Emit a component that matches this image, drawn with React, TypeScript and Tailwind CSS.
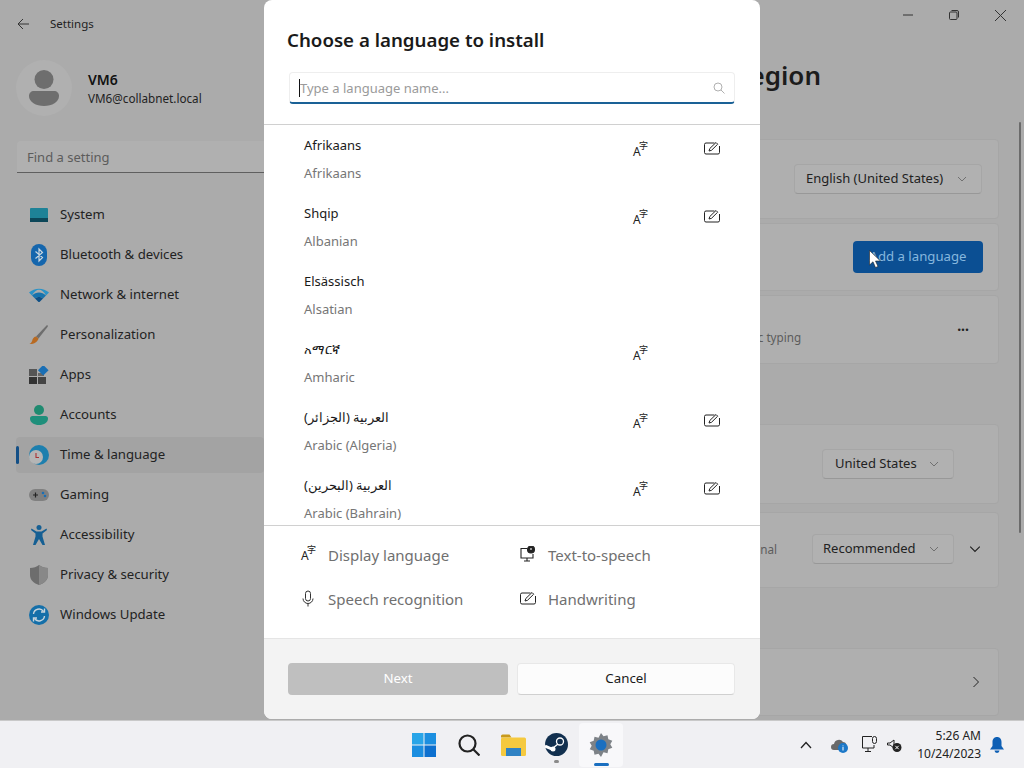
import React from 'react';

const font = { fontFamily: '"Noto Sans", "Noto Sans CJK SC", sans-serif' };

function SystemIcon() {
  return (
    <svg width="20" height="16" viewBox="0 0 20 16">
      <rect x="1" y="1" width="18" height="14" rx="1" fill="#1e8297" />
      <rect x="1" y="11" width="18" height="4" fill="#0c4658" />
    </svg>
  );
}

function BluetoothIcon() {
  return (
    <svg width="16" height="22" viewBox="0 0 16 22">
      <rect x="0" y="0" width="16" height="22" rx="8" fill="#1566ad" />
      <path d="M4.5 7.5l7 6-3.5 3.5V5l3.5 3.5-7 6" stroke="#c9d6df" strokeWidth="1.2" fill="none" />
    </svg>
  );
}

function WifiIcon() {
  return (
    <svg width="20" height="14" viewBox="0 0 20 14">
      <path d="M0 4.5C5.5-.6 14.5-.6 20 4.5l-3 3C13-.2 7-.2 3 7.5z" fill="#2a93c8" />
      <path d="M3 7.5C7 3.6 13 3.6 17 7.5l-3 3c-2.300-2-5.700-2-8 0z" fill="#1773ad" />
      <path d="M6 10.500c2.300-2 5.700-2 8 0L10 14.500z" fill="#0d4f86" />
    </svg>
  );
}

function BrushIcon() {
  return (
    <svg width="20" height="20" viewBox="0 0 20 20">
      <path d="M18 0c.8.300 1 1 .7 1.700L9.500 13.500 7 11.500z" fill="#6e6e6e" />
      <path d="M7 11.500l2.500 2c-1 3.500-4 5.500-9 5.500 2.500-1.500 2.500-3 3-4.500.6-1.600 2-2.800 3.500-3z" fill="#b86a22" />
    </svg>
  );
}

function AppsIcon() {
  return (
    <svg width="20" height="18" viewBox="0 0 20 18">
      <rect x="0" y="3" width="8" height="7" fill="#555" />
      <rect x="0" y="11" width="8" height="7" fill="#333" />
      <rect x="9" y="11" width="8" height="7" fill="#444" />
      <rect x="9" y="7" width="6" height="3" fill="#666" />
      <rect x="10.500" y="0.500" width="7.500" height="7.500" transform="rotate(45 14.250 4.250)" fill="#1a6fb5" />
    </svg>
  );
}

function AccountIcon() {
  return (
    <svg width="18" height="20" viewBox="0 0 18 20">
      <circle cx="9" cy="5" r="5" fill="#1f8a70" />
      <path d="M0 13.500c0-1.400 1-2.500 2.500-2.500h13c1.500 0 2.500 1.100 2.500 2.500 0 4-4 6.500-9 6.500s-9-2.500-9-6.500z" fill="#1f8f7b" />
    </svg>
  );
}

function ClockGlobeIcon() {
  return (
    <svg width="20" height="20" viewBox="0 0 20 20">
      <circle cx="10" cy="10" r="10" fill="#1d7fae" />
      <circle cx="7" cy="12" r="7" fill="#b5b5b5" />
      <path d="M7 8v4.500h3" stroke="#a33" strokeWidth="1.100" fill="none" />
    </svg>
  );
}

function GamingIcon() {
  return (
    <svg width="20" height="14" viewBox="0 0 20 14">
      <rect x="0" y="1" width="20" height="12" rx="6" fill="#808080" />
      <path d="M4 7h5M6.500 4.500v5" stroke="#222" strokeWidth="1.200" />
      <circle cx="14" cy="5" r="1.300" fill="#1a6fb5" />
      <circle cx="16" cy="8" r="1.300" fill="#1a6fb5" />
    </svg>
  );
}

function AccessibilityIcon() {
  return (
    <svg width="16" height="20" viewBox="0 0 16 20">
      <circle cx="8" cy="2.500" r="2.500" fill="#155f93" />
      <path d="M0.500 3.500l5 3h5l5-3 .5 1.500-4.500 3.500v3L14 20h-2.500L8 14l-3.500 6H2l2.500-8.500v-3L0 5z" fill="#155f93" />
    </svg>
  );
}

function ShieldIcon() {
  return (
    <svg width="18" height="20" viewBox="0 0 18 20">
      <path d="M9 0c2.500 2 5.500 3 9 3v7c0 5-4 8.500-9 10-5-1.500-9-5-9-10V3c3.500 0 6.500-1 9-3z" fill="#6d6d6d" />
      <path d="M9 0c2.500 2 5.500 3 9 3v7c0 5-4 8.500-9 10z" fill="#888" />
    </svg>
  );
}

function UpdateIcon() {
  return (
    <svg width="20" height="20" viewBox="0 0 20 20">
      <circle cx="10" cy="10" r="10" fill="#146fa9" />
      <path d="M4.500 9a5.500 5.500 0 0 1 10-2.500M15.500 11a5.500 5.500 0 0 1-10 2.500" stroke="#c6d4dc" strokeWidth="1.400" fill="none" />
      <path d="M15.500 3.500v3.500H12M4.500 16.500V13H8" stroke="#c6d4dc" strokeWidth="1.400" fill="none" />
    </svg>
  );
}

const navItems = [
  { label: 'System', icon: <SystemIcon /> },
  { label: 'Bluetooth & devices', icon: <BluetoothIcon /> },
  { label: 'Network & internet', icon: <WifiIcon /> },
  { label: 'Personalization', icon: <BrushIcon /> },
  { label: 'Apps', icon: <AppsIcon /> },
  { label: 'Accounts', icon: <AccountIcon /> },
  { label: 'Time & language', icon: <ClockGlobeIcon />, active: true },
  { label: 'Gaming', icon: <GamingIcon /> },
  { label: 'Accessibility', icon: <AccessibilityIcon /> },
  { label: 'Privacy & security', icon: <ShieldIcon /> },
  { label: 'Windows Update', icon: <UpdateIcon /> },
];

function Chevron({ color = '#707070', size = 10 }: { color?: string; size?: number }) {
  return (
    <svg width={size} height={size} viewBox="0 0 10 10">
      <path d="M1 3l4 4 4-4" stroke={color} strokeWidth="1" fill="none" />
    </svg>
  );
}

function Dropdown({ label, className }: { label: string; className: string }) {
  return (
    <div className={`h-[30px] flex items-center justify-between rounded border border-[#a6a6a6] border-b-[#989898] bg-[#b1b1b1] pr-[14px] text-[13px] text-[#222] ${className}`}>
      <span className="whitespace-nowrap">{label}</span>
      <Chevron />
    </div>
  );
}

function LangIcon() {
  return (
    <svg width="18" height="20" viewBox="0 0 18 20">
      <text x="1" y="15.500" fontSize="12" fill="#222" fontFamily="Noto Sans">A</text>
      <text x="7" y="9" fontSize="9" fill="#222" fontFamily="Noto Sans CJK SC">字</text>
    </svg>
  );
}

function PenIcon({ size = 16, color = '#222' }: { size?: number; color?: string }) {
  return (
    <svg width={size} height={size} viewBox="0 0 16 16" fill="none" stroke={color} strokeWidth="1">
      <path d="M10.500 3H2a1.500 1.500 0 0 0-1.500 1.500v8A1.500 1.500 0 0 0 2 14h12a1.500 1.500 0 0 0 1.500-1.500V6" />
      <path d="M5 11l.8-2.500L12 2.500l1.700 1.700L7.500 10.300z" />
    </svg>
  );
}

function MicIcon() {
  return (
    <svg width="14" height="18" viewBox="0 0 14 18" fill="none" stroke="#333" strokeWidth="1">
      <rect x="4.500" y="1" width="5" height="10" rx="2.500" />
      <path d="M2 8.500a5 5 0 0 0 10 0M7 13.500v3" />
    </svg>
  );
}

function SpeechIcon() {
  return (
    <svg width="16" height="16" viewBox="0 0 16 16" fill="none" stroke="#222" strokeWidth="1.100">
      <path d="M7 2.500H1v9.500h12V8" />
      <path d="M7 12v2.500M4 15h6" />
      <circle cx="11" cy="3.500" r="3.500" fill="#222" />
      <path d="M11 2v2" stroke="#fff" />
    </svg>
  );
}

const languages = [
  { name: 'Afrikaans', sub: 'Afrikaans', display: true, pen: true },
  { name: 'Shqip', sub: 'Albanian', display: true, pen: true },
  { name: 'Elsässisch', sub: 'Alsatian', display: false, pen: false },
  { name: 'አማርኛ', sub: 'Amharic', display: true, pen: false },
  { name: 'العربية (الجزائر)', sub: 'Arabic (Algeria)', display: true, pen: true, rtl: true },
  { name: 'العربية (البحرين)', sub: 'Arabic (Bahrain)', display: true, pen: true, rtl: true },
];

function Card({ className, children }: { className: string; children?: React.ReactNode }) {
  return (
    <div className={`flex items-center justify-end rounded border border-[#a6a6a6] bg-[#afafaf] whitespace-nowrap overflow-hidden ${className}`}>
      {children}
    </div>
  );
}

function Sidebar() {
  return (
    <aside className="w-[264px] shrink-0 flex flex-col">
      <div className="h-12 flex items-center pl-[17px] gap-[21px] text-[11.5px] text-[#222]">
        <svg width="12" height="12" viewBox="0 0 12 12" fill="none" stroke="#333" strokeWidth="1">
          <path d="M12 6H1M6 1L1 6l5 5" />
        </svg>
        <span>Settings</span>
      </div>
      <div className="flex items-center mt-[12px] pl-4 gap-4">
        <div className="w-14 h-14 rounded-full bg-[#b0b0b0] flex items-center justify-center">
          <svg width="30" height="36" viewBox="0 0 30 36">
            <circle cx="15" cy="9.500" r="9.500" fill="#6e6e6e" />
            <path d="M0 26c0-3 2-5 5-5h20c3 0 5 2 5 5 0 6-7 10-15 10S0 32 0 26z" fill="#6e6e6e" />
          </svg>
        </div>
        <div className="flex flex-col">
          <span className="text-[14px] leading-[20px] font-semibold text-[#111]">VM6</span>
          <span className="text-[11.7px] leading-[16px] text-[#222]">VM6@collabnet.local</span>
        </div>
      </div>
      <div className="mt-[25px] ml-[17px] h-[32px] flex items-center pl-[10px] pt-[2px] bg-[#b0b0b0] border-b border-[#5f5f5f] rounded-tl text-[13px] text-[#5c5c5c]">
        Find a setting
      </div>
      <nav className="mt-6 ml-4 flex flex-col gap-1">
        {navItems.map((item) => (
          <div
            key={item.label}
            className={`relative h-9 flex items-center rounded text-[13.2px] text-[#222] ${item.active ? 'bg-[#a3a3a3]' : ''}`}
          >
            {item.active && <span className="absolute left-0 top-[9px] w-[3px] h-[18px] rounded bg-[#134f86]" />}
            <span className="w-[44px] flex justify-center pl-[1px]">{item.icon}</span>
            <span>{item.label}</span>
          </div>
        ))}
      </nav>
    </aside>
  );
}

function MainPane() {
  return (
    <main className="relative flex-1 flex flex-col pl-6 pr-[25px] overflow-hidden">
      <div className="flex justify-end h-[30px]">
        <div className="flex items-center gap-[36px] mr-[-7px]">
          <svg width="10" height="10" viewBox="0 0 10 10"><path d="M0 5h10" stroke="#333" /></svg>
          <svg width="10" height="10" viewBox="0 0 10 10" fill="none" stroke="#333"><rect x="0.500" y="2" width="7.500" height="7.500" rx="1" /><path d="M2.500 .5h5.500a1.500 1.500 0 0 1 1.500 1.500v5.500" /></svg>
          <svg width="11" height="11" viewBox="0 0 11 11"><path d="M0 0l11 11M11 0L0 11" stroke="#333" /></svg>
        </div>
      </div>
      <h1 className="mt-[25px] text-[26px] leading-[40px] font-semibold text-[#1c1c1c] text-right mr-[178px] whitespace-nowrap">
        Language &amp; region
      </h1>
      <Card className="mt-[44px] h-[80px] pr-[16px]">
        <Dropdown label="English (United States)" className="w-[188px] pl-[11px]" />
      </Card>
      <Card className="mt-[4px] h-[68px] pr-[15px]">
        <button className="w-[130px] h-[32px] rounded bg-[#0b4f93] text-[13.2px] text-[#86b7de]">Add a language</button>
      </Card>
      <Card className="mt-[4px] h-[69px] pr-[29px]">
        <span className="text-[11.7px] text-[#5c5c5c] mt-4 mr-[156px]">basic typing</span>
        <span className="text-[14px] leading-none font-bold text-[#222] mb-[8px]">...</span>
      </Card>
      <Card className="mt-[60px] h-[80px] pr-[44px]">
        <Dropdown label="United States" className="w-[132px] pl-[12px]" />
      </Card>
      <Card className="mt-[8px] h-[76px] pr-[17px] pb-[3px]">
        <span className="text-[11.7px] text-[#5c5c5c] mr-[35px] mt-[3px]">Regional</span>
        <Dropdown label="Recommended" className="w-[142px] pl-[10px]" />
        <span className="ml-[15px]"><Chevron color="#222" size={12} /></span>
      </Card>
      <Card className="mt-[60px] h-[68px] pr-[18px]">
        <svg width="8" height="12" viewBox="0 0 8 12" fill="none" stroke="#222"><path d="M1.500 1l5 5-5 5" /></svg>
      </Card>
      <span className="absolute right-[3px] top-[122px] w-[2px] h-[411px] rounded bg-[#6b6b6b]" />
    </main>
  );
}

function LanguageDialog() {
  return (
    <div className="absolute left-[264px] top-0 w-[496px] h-[719px] rounded-lg bg-white flex flex-col overflow-hidden">
      <div className="h-[125px] shrink-0 border-b border-[#d0d0d0] px-6">
        <h2 className="pt-[24px] ml-[-1px] text-[18.7px] leading-[32px] font-semibold text-[#1a1a1a]">Choose a language to install</h2>
        <div className="mt-[16px] ml-[1px] w-[446px] h-[32px] flex items-center justify-between rounded border border-[#eeeeee] border-b-2 border-b-[#1a6196] pl-[9px] pr-[9px]">
          <span className="text-[13px] text-[#9a9a9a] border-l border-[#111] leading-[18px]">Type a language name...</span>
          <svg width="12" height="12" viewBox="0 0 12 12" fill="none" stroke="#b0b0b0"><circle cx="5" cy="5" r="4" /><path d="M8 8l3.500 3.500" /></svg>
        </div>
      </div>
      <div className="h-[400px] shrink-0 overflow-hidden">
        {languages.map((lang) => (
          <div key={lang.sub} className="relative h-[68px] pl-10">
            <div className="pt-[10px] text-[13px] leading-[20px] text-[#1a1a1a]">
              {lang.rtl ? <span dir="rtl" className="inline-block">{lang.name}</span> : lang.name}
            </div>
            <div className="mt-[8px] text-[13px] leading-[20px] text-[#767676]">{lang.sub}</div>
            {lang.display && <span className="absolute left-[368px] top-[15px]"><LangIcon /></span>}
            {lang.pen && <span className="absolute left-[440px] top-[15px]"><PenIcon /></span>}
          </div>
        ))}
      </div>
      <div className="h-[113px] shrink-0 border-t border-[#d0d0d0] pl-[36px] pt-[7px] grid grid-cols-[220px_1fr] auto-rows-[44px] text-[15px] text-[#707070]">
        <div className="flex items-center gap-[10px]"><span className="mb-[2px]"><LangIcon /></span><span>Display language</span></div>
        <div className="flex items-center gap-[12px]"><span className="mb-[2px]"><SpeechIcon /></span><span>Text-to-speech</span></div>
        <div className="flex items-center gap-[13px] pl-[1px]"><MicIcon /><span>Speech recognition</span></div>
        <div className="flex items-center gap-[12px]"><span className="mb-[3px]"><PenIcon /></span><span>Handwriting</span></div>
      </div>
      <div className="flex-1 border-t border-[#e5e5e5] bg-[#f3f3f3] flex gap-[9px] px-6 pt-[24px] text-[13.3px]">
        <button className="w-[220px] h-[32px] rounded bg-[#bfbfbf] text-white">Next</button>
        <button className="w-[218px] h-[32px] rounded bg-[#fcfcfc] border border-[#e8e8e8] border-b-[#d0d0d0] text-[#1a1a1a]">Cancel</button>
      </div>
    </div>
  );
}

function Taskbar() {
  return (
    <footer className="h-[48px] shrink-0 flex items-center bg-[#f0f0f3] border-t border-[#c9c9c9]">
      <div className="flex items-center pl-[412px]">
        <svg width="24" height="24" viewBox="0 0 24 24" className="mr-[22px]">
          <rect x="0" y="0" width="11.500" height="11.500" fill="#29a5e8" />
          <rect x="12.500" y="0" width="11.500" height="11.500" fill="#1c8fe0" />
          <rect x="0" y="12.500" width="11.500" height="11.500" fill="#1b8ee0" />
          <rect x="12.500" y="12.500" width="11.500" height="11.500" fill="#0d70cf" />
        </svg>
        <svg width="22" height="22" viewBox="0 0 22 22" fill="none" stroke="#222" strokeWidth="2.200" className="mr-[21px]">
          <circle cx="9.500" cy="9.500" r="8" />
          <path d="M15 15l6.500 6.500" />
        </svg>
        <svg width="25" height="22" viewBox="0 0 25 22" className="mr-[19px]">
          <path d="M0 2a1.500 1.500 0 0 1 1.500-1.500h7l2 3H0z" fill="#c89a1d" />
          <rect x="0" y="3.500" width="25" height="18.500" rx="1.500" fill="#f5c93f" />
          <rect x="5" y="14" width="15" height="8" fill="#2f82c4" />
        </svg>
        <div className="relative mr-[11px]">
          <svg width="23" height="23" viewBox="0 0 23 23">
            <circle cx="11.500" cy="11.500" r="11.500" fill="#12304f" />
            <circle cx="15" cy="8.500" r="3.500" fill="none" stroke="#fff" strokeWidth="1.300" />
            <path d="M0 13l8 3.500" stroke="#fff" strokeWidth="3" />
            <circle cx="8" cy="16" r="2.500" fill="#fff" />
            <path d="M8 15l5-4" stroke="#fff" strokeWidth="1.500" />
          </svg>
          <span className="absolute left-[9px] top-[27px] w-[5px] h-[3px] rounded bg-[#8a8a8a]" />
        </div>
        <div className="relative w-[44px] h-[44px] rounded bg-[#f8f8fa] flex items-center justify-center">
          <svg width="24" height="24" viewBox="0 0 24 24">
            <path d="M12 0l2.500 3.200 4-1 .8 4 4 1.500-2 3.500 2 3.500-4 1.500-.8 4-4-1L12 24l-2.500-3.200-4 1-.8-4-4-1.500 2-3.500-2-3.500 4-1.500.8-4 4 1z" fill="#7d8287" />
            <circle cx="12" cy="12" r="5.500" fill="#1a6fc0" />
          </svg>
          <span className="absolute left-[15px] bottom-[1px] w-[15px] h-[3px] rounded bg-[#1a6fc0]" />
        </div>
      </div>
      <div className="ml-auto flex items-center pr-[20px]">
        <svg width="12" height="8" viewBox="0 0 12 8" fill="none" stroke="#222" strokeWidth="1.300" className="mr-[19px]"><path d="M1 7l5-5.500L11 7" /></svg>
        <svg width="18" height="16" viewBox="0 0 18 16" className="mr-[13px]">
          <path d="M3 13a3 3 0 0 1 0-6 5 5 0 0 1 9-2c2 0 3 1 3.500 3V13z" fill="#6a6a6a" />
          <circle cx="12" cy="11" r="5" fill="#1c78c8" />
          <path d="M12 10v3.500M12 8.500v.8" stroke="#fff" />
        </svg>
        <svg width="16" height="17" viewBox="0 0 16 17" fill="none" stroke="#222" className="mr-[9px]">
          <path d="M10 .5H.5v11.500H12V9" />
          <path d="M6 12v3M3 15.500h6" />
          <rect x="10.500" y="0.500" width="4" height="7" rx="2" />
        </svg>
        <svg width="15" height="14" viewBox="0 0 15 14" className="mr-[15px]">
          <path d="M.5 5h2.500L7 2v8L3 7H.5z" fill="none" stroke="#222" />
          <circle cx="10" cy="9.500" r="4.500" fill="#222" />
          <path d="M8.300 7.800l3.400 3.400M11.700 7.800l-3.400 3.400" stroke="#fff" />
        </svg>
        <div className="flex flex-col items-end text-[12px] leading-[18px] text-[#222] mr-[9px]">
          <span>5:26 AM</span>
          <span>10/24/2023</span>
        </div>
        <svg width="14" height="16" viewBox="0 0 14 16">
          <path d="M7 0c3 0 4.500 2.300 4.500 5v4l2.500 3.500H0L2.500 9V5C2.500 2.300 4 0 7 0z" fill="#0e5fb4" />
          <path d="M4.500 13.500h5a2.500 2.500 0 0 1-5 0z" fill="#0e5fb4" />
        </svg>
      </div>
    </footer>
  );
}

export default function App() {
  return (
    <div className="relative w-[1024px] h-[768px] overflow-hidden flex flex-col bg-[#ababab]" style={font}>
      <div className="flex flex-1 min-h-0">
        <Sidebar />
        <MainPane />
      </div>
      <Taskbar />
      <LanguageDialog />
      <svg width="12" height="18" viewBox="0 0 12 18" className="absolute left-[869px] top-[250px]">
        <path d="M0.500 0.500V15l3.500-3.200L6.500 17.500l2.500-1-2.500-5.500h5z" fill="#fff" stroke="#222" strokeWidth="0.600" />
      </svg>
    </div>
  );
}
